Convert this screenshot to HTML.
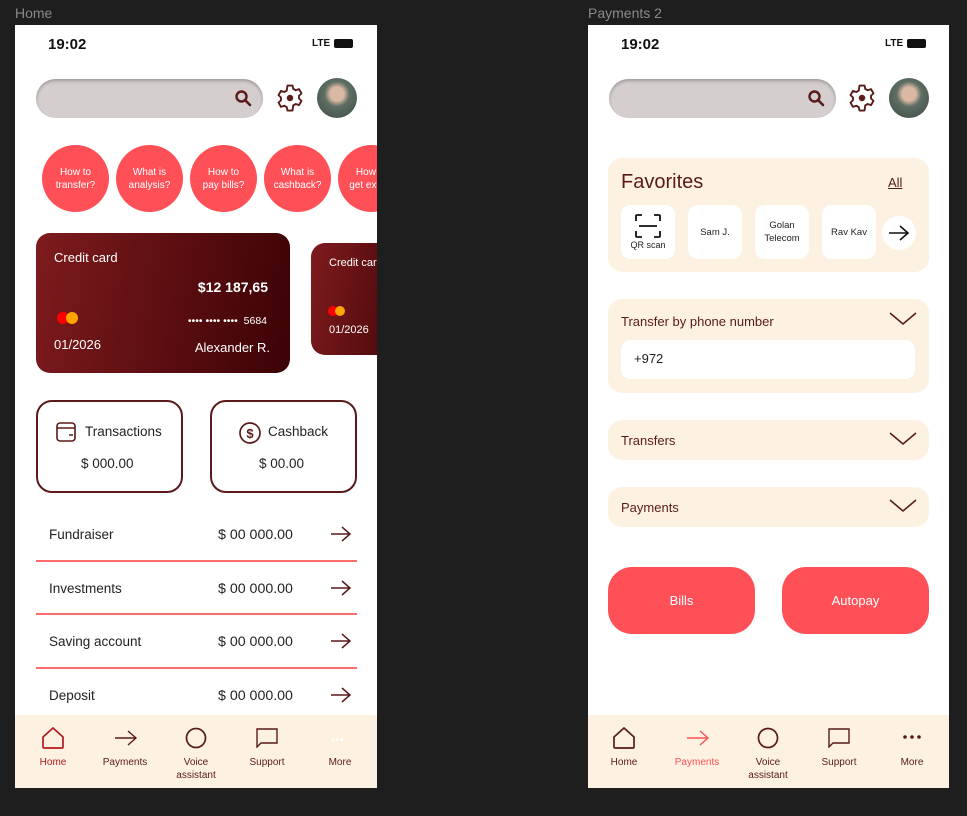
<!DOCTYPE html>
<html><head><meta charset="utf-8"><style>
*{margin:0;padding:0;box-sizing:border-box}
body{width:967px;height:816px;background:#1e1e1e;position:relative;overflow:hidden;font-family:"Liberation Sans",sans-serif}
.a{position:absolute}
.lbl{color:#8a8a8a;font-size:14px;top:5px}
.fr{position:absolute;top:25px;width:362px;height:763px;background:#fff;overflow:hidden}
.time{left:33px;top:11px;font-size:15px;font-weight:bold;color:#111}
.lte{left:297px;top:13px;font-size:10px;font-weight:bold;color:#111}
.bat{left:319px;top:14px;width:19px;height:9px;background:#111;border-radius:2px}
.search{left:21px;top:54px;width:227px;height:39px;border-radius:20px;background:#d4cece;box-shadow:inset 0 2px 3px rgba(0,0,0,.25)}
.av{left:302px;top:53px;width:40px;height:40px;border-radius:50%;background:radial-gradient(circle at 50% 40%,#d9b9a3 0 22%,#5e6e63 40%,#3b4b45 100%)}
.bub{width:67px;height:67px;border-radius:50%;background:#ff5057;color:#fff;font-size:10px;line-height:13px;display:flex;align-items:center;justify-content:center;text-align:center;top:120px}
.card{border-radius:14px;background:linear-gradient(100deg,#7e1b1e,#3c0205);color:#fff}
.box{top:375px;width:147px;height:93px;border:2px solid #5a1a1a;border-radius:16px;font-size:13.5px;color:#222}
.row{left:34px;font-size:13.5px;color:#222}
.amt{left:203px;font-size:14.2px;color:#222}
.sep{left:21px;width:321px;height:1.5px;background:#ff6b6b}
.nav{left:0;top:690px;width:362px;height:73px;background:#fdf2e1}
.nl{font-size:10px;color:#5a1a1a;text-align:center;width:70px;line-height:13px;top:41px}
.pan{left:20px;width:321px;background:#fdf2e1;border-radius:14px}
.pt{font-size:13px;color:#5a1a1a}
.tile{top:180px;width:54px;height:54px;background:#fff;border-radius:10px;font-size:9.5px;color:#222;display:flex;align-items:center;justify-content:center;text-align:center;line-height:13px}
.btn{top:542px;width:147px;height:67px;border-radius:24px;background:#ff5057;color:#fff;font-size:13px;display:flex;align-items:center;justify-content:center}
</style></head><body>
<div class="a lbl" style="left:15px">Home</div>
<div class="a lbl" style="left:588px">Payments 2</div>

<!-- HOME -->
<div class="fr" style="left:15px">
<div class="a time">19:02</div><div class="a lte">LTE</div><div class="a bat"></div>
<div class="a search"></div>
<svg class="a" style="left:219px;top:64px" width="18" height="18" viewBox="0 0 18 18"><circle cx="7.5" cy="7.5" r="5" fill="none" stroke="#5a1a1a" stroke-width="2.4"/><path d="M11 11l5 5" stroke="#5a1a1a" stroke-width="2.6" stroke-linecap="round"/></svg>
<svg class="a" style="left:260px;top:58px" width="30" height="30" viewBox="0 0 24 24"><path fill="none" stroke="#5a1a1a" stroke-width="1.5" stroke-linejoin="round" d="M10 2h4l.6 2.7 2 1.1 2.6-.9 2 3.4-2 1.9v2.2l2 1.9-2 3.4-2.6-.9-2 1.1L14 22h-4l-.6-2.7-2-1.1-2.6.9-2-3.4 2-1.9v-2.2l-2-1.9 2-3.4 2.6.9 2-1.1z"/><circle cx="12" cy="12" r="2.6" fill="#5a1a1a"/></svg>
<div class="a av"></div>
<div class="a bub" style="left:27px">How to<br>transfer?</div>
<div class="a bub" style="left:101px">What is<br>analysis?</div>
<div class="a bub" style="left:175px">How to<br>pay bills?</div>
<div class="a bub" style="left:249px">What is<br>cashback?</div>
<div class="a bub" style="left:323px">How to<br>get extra?</div>
<div class="a card" style="left:21px;top:208px;width:254px;height:140px">
 <div class="a" style="left:18px;top:17px;font-size:13px">Credit card</div>
 <div class="a" style="right:22px;top:46px;font-size:14px;font-weight:bold">$12 187,65</div>
 <div class="a" style="left:21px;top:79px;width:12px;height:12px;border-radius:50%;background:#f00"></div>
 <div class="a" style="left:30px;top:79px;width:12px;height:12px;border-radius:50%;background:#ffa500"></div>
 <div class="a" style="right:23px;top:82px;font-size:10.5px">•••• •••• ••••&nbsp; 5684</div>
 <div class="a" style="left:18px;top:104px;font-size:13px">01/2026</div>
 <div class="a" style="right:20px;top:107px;font-size:13px">Alexander R.</div>
</div>
<div class="a card" style="left:296px;top:218px;width:120px;height:112px">
 <div class="a" style="left:18px;top:14px;font-size:11px">Credit card</div>
 <div class="a" style="left:17px;top:63px;width:10px;height:10px;border-radius:50%;background:#f00"></div>
 <div class="a" style="left:24px;top:63px;width:10px;height:10px;border-radius:50%;background:#ffa500"></div>
 <div class="a" style="left:18px;top:81px;font-size:11px">01/2026</div>
</div>
<div class="a box" style="left:21px">
 <svg class="a" style="left:17px;top:19px" width="22" height="22" viewBox="0 0 22 22"><rect x="2" y="2" width="18" height="18" rx="3" fill="none" stroke="#5a1a1a" stroke-width="1.6"/><path d="M2 7h18M14 14h4" stroke="#5a1a1a" stroke-width="1.6"/></svg>
 <div class="a" style="left:47px;top:22px">Transactions</div>
 <div class="a" style="left:43px;top:54px">$ 000.00</div>
</div>
<div class="a box" style="left:195px">
 <svg class="a" style="left:26px;top:19px" width="24" height="24" viewBox="0 0 24 24"><circle cx="12" cy="12" r="10" fill="none" stroke="#5a1a1a" stroke-width="1.7"/><text x="12" y="17" text-anchor="middle" font-size="13" font-weight="bold" fill="#5a1a1a" font-family="Liberation Sans">$</text></svg>
 <div class="a" style="left:56px;top:22px">Cashback</div>
 <div class="a" style="left:47px;top:54px">$ 00.00</div>
</div>
<div class="a row" style="top:502px">Fundraiser</div><div class="a amt" style="top:502px">$ 00 000.00</div>
<div class="a sep" style="top:535px"></div>
<div class="a row" style="top:556px">Investments</div><div class="a amt" style="top:556px">$ 00 000.00</div>
<div class="a sep" style="top:588px"></div>
<div class="a row" style="top:609px">Saving account</div><div class="a amt" style="top:609px">$ 00 000.00</div>
<div class="a sep" style="top:642px"></div>
<div class="a row" style="top:663px">Deposit</div><div class="a amt" style="top:663px">$ 00 000.00</div>
<svg class="a" style="left:314px;top:500px" width="24" height="200" viewBox="0 0 24 200"><g fill="none" stroke="#5a1a1a" stroke-width="1.5"><path d="M2 9h19M13 2l8 7-8 7"/><path d="M2 63h19M13 56l8 7-8 7"/><path d="M2 116h19M13 109l8 7-8 7"/><path d="M2 170h19M13 163l8 7-8 7"/></g></svg>
<div class="a nav">
 <svg class="a" style="left:26px;top:11px" width="24" height="24" viewBox="0 0 24 24"><path d="M2 11L12 2l10 9v10a1 1 0 0 1-1 1H3a1 1 0 0 1-1-1z" fill="none" stroke="#b3191f" stroke-width="1.7"/></svg>
 <svg class="a" style="left:99px;top:14px" width="24" height="18" viewBox="0 0 24 18"><path d="M1 9h21M14 2l8 7-8 7" fill="none" stroke="#5a1a1a" stroke-width="1.4"/></svg>
 <svg class="a" style="left:170px;top:12px" width="22" height="22" viewBox="0 0 22 22"><circle cx="11" cy="11" r="9.5" fill="none" stroke="#5a1a1a" stroke-width="1.7"/></svg>
 <svg class="a" style="left:241px;top:13px" width="22" height="20" viewBox="0 0 22 20"><path d="M1 1h20v14H5l-4 4z" fill="none" stroke="#5a1a1a" stroke-width="1.4"/></svg>
 <div class="a" style="left:316px;top:20px;color:#fff;font-size:10px;letter-spacing:1px">•••</div>
 <div class="a nl" style="left:3px;color:#b3191f">Home</div>
 <div class="a nl" style="left:75px">Payments</div>
 <div class="a nl" style="left:146px">Voice<br>assistant</div>
 <div class="a nl" style="left:217px">Support</div>
 <div class="a nl" style="left:290px">More</div>
</div>
</div>

<!-- PAYMENTS -->
<div class="fr" style="left:588px;width:361px">
<div class="a time">19:02</div><div class="a lte">LTE</div><div class="a bat"></div>
<div class="a search"></div>
<svg class="a" style="left:219px;top:64px" width="18" height="18" viewBox="0 0 18 18"><circle cx="7.5" cy="7.5" r="5" fill="none" stroke="#5a1a1a" stroke-width="2.4"/><path d="M11 11l5 5" stroke="#5a1a1a" stroke-width="2.6" stroke-linecap="round"/></svg>
<svg class="a" style="left:259px;top:58px" width="30" height="30" viewBox="0 0 24 24"><path fill="none" stroke="#5a1a1a" stroke-width="1.5" stroke-linejoin="round" d="M10 2h4l.6 2.7 2 1.1 2.6-.9 2 3.4-2 1.9v2.2l2 1.9-2 3.4-2.6-.9-2 1.1L14 22h-4l-.6-2.7-2-1.1-2.6.9-2-3.4 2-1.9v-2.2l-2-1.9 2-3.4 2.6.9 2-1.1z"/><circle cx="12" cy="12" r="2.6" fill="#5a1a1a"/></svg>
<div class="a av" style="left:301px"></div>
<div class="a pan" style="top:133px;height:114px">
 <div class="a" style="left:13px;top:13px;font-size:20px;color:#5a1a1a">Favorites</div>
 <div class="a" style="left:280px;top:17px;font-size:13px;color:#5a1a1a;text-decoration:underline">All</div>
</div>
<div class="a tile" style="left:33px;flex-direction:column">
 <svg width="28" height="26" viewBox="0 0 28 26"><g fill="none" stroke="#111" stroke-width="1.8"><path d="M2 8V3a1 1 0 0 1 1-1h5M20 2h5a1 1 0 0 1 1 1v5M26 18v5a1 1 0 0 1-1 1h-5M8 24H3a1 1 0 0 1-1-1v-5M5 13h18"/></g></svg>
 <span style="font-size:9px">QR scan</span></div>
<div class="a tile" style="left:100px">Sam J.</div>
<div class="a tile" style="left:167px">Golan<br>Telecom</div>
<div class="a tile" style="left:234px">Rav Kav</div>
<div class="a" style="left:294px;top:191px;width:34px;height:34px;border-radius:50%;background:#fff"></div>
<svg class="a" style="left:300px;top:199px" width="22" height="18" viewBox="0 0 22 18"><path d="M1 9h19M12 2l8 7-8 7" fill="none" stroke="#111" stroke-width="1.6"/></svg>
<div class="a pan" style="top:274px;height:94px">
 <div class="a pt" style="left:13px;top:15px">Transfer by phone number</div>
 <div class="a" style="left:13px;top:41px;width:294px;height:39px;background:#fff;border-radius:10px;font-size:13px;color:#222;padding:11px 0 0 13px">+972</div>
</div>
<div class="a pan" style="top:395px;height:40px"><div class="a pt" style="left:13px;top:13px">Transfers</div></div>
<div class="a pan" style="top:462px;height:40px"><div class="a pt" style="left:13px;top:13px">Payments</div></div>
<svg class="a" style="left:300px;top:286px" width="30" height="240" viewBox="0 0 30 240"><g fill="none" stroke="#5a1a1a" stroke-width="1.6"><path d="M2 2l13 11 13-11"/><path d="M2 122l13 11 13-11"/><path d="M2 189l13 11 13-11"/></g></svg>
<div class="a btn" style="left:20px">Bills</div>
<div class="a btn" style="left:194px">Autopay</div>
<div class="a nav" style="width:361px">
 <svg class="a" style="left:24px;top:11px" width="24" height="24" viewBox="0 0 24 24"><path d="M2 11L12 2l10 9v10a1 1 0 0 1-1 1H3a1 1 0 0 1-1-1z" fill="none" stroke="#5a1a1a" stroke-width="1.7"/></svg>
 <svg class="a" style="left:98px;top:14px" width="24" height="18" viewBox="0 0 24 18"><path d="M1 9h21M14 2l8 7-8 7" fill="none" stroke="#ff5057" stroke-width="1.4"/></svg>
 <svg class="a" style="left:169px;top:12px" width="22" height="22" viewBox="0 0 22 22"><circle cx="11" cy="11" r="9.5" fill="none" stroke="#5a1a1a" stroke-width="1.7"/></svg>
 <svg class="a" style="left:240px;top:13px" width="22" height="20" viewBox="0 0 22 20"><path d="M1 1h20v14H5l-4 4z" fill="none" stroke="#5a1a1a" stroke-width="1.4"/></svg>
 <svg class="a" style="left:314px;top:19px" width="20" height="6" viewBox="0 0 20 6"><g fill="#5a1a1a"><circle cx="3" cy="3" r="1.8"/><circle cx="10" cy="3" r="1.8"/><circle cx="17" cy="3" r="1.8"/></g></svg>
 <div class="a nl" style="left:1px">Home</div>
 <div class="a nl" style="left:74px;color:#ff5057">Payments</div>
 <div class="a nl" style="left:145px">Voice<br>assistant</div>
 <div class="a nl" style="left:216px">Support</div>
 <div class="a nl" style="left:289px">More</div>
</div>
</div>
</body></html>
